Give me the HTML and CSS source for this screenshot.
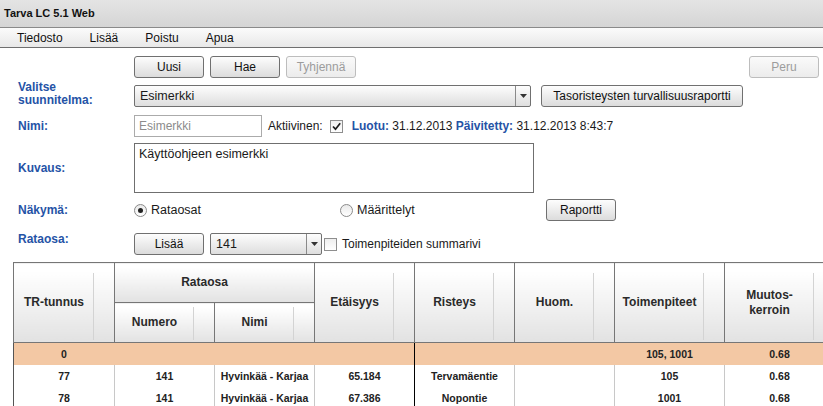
FILE: index.html
```html
<!DOCTYPE html>
<html lang="fi">
<head>
<meta charset="utf-8">
<title>Tarva LC 5.1 Web</title>
<link rel="stylesheet" href="styles.css">
</head>
<body>
<div class="titlebar">Tarva LC 5.1 Web</div>
<nav class="menubar">
  <span class="menu-item">Tiedosto</span>
  <span class="menu-item">Lisää</span>
  <span class="menu-item">Poistu</span>
  <span class="menu-item">Apua</span>
</nav>
<main class="form">
  <div class="row h-actions">
    <div class="label"></div>
    <div class="btn">Uusi</div>
    <div class="btn">Hae</div>
    <div class="btn disabled">Tyhjennä</div>
    <div class="btn disabled push-right">Peru</div>
  </div>
  <div class="row h-plan">
    <div class="label two-line">Valitse<br>suunnitelma:</div>
    <div class="select plan-select"><span class="select-value">Esimerkki</span><span class="select-arrow"><svg width="7" height="4" viewBox="0 0 7 4"><polygon points="0,0 7,0 3.5,4" fill="#333"/></svg></span></div>
    <div class="btn wide">Tasoristeysten turvallisuusraportti</div>
  </div>
  <div class="row h-name">
    <div class="label">Nimi:</div>
    <div class="input">Esimerkki</div>
    <span class="text active-label">Aktiivinen:</span>
    <span class="check checked"><svg width="11" height="11" viewBox="0 0 11 11"><path d="M2 5.5 L4.5 8.2 L9.2 2.2" fill="none" stroke="#1a1a1a" stroke-width="1.7"/></svg></span>
    <span class="meta"><b class="blue">Luotu:</b> 31.12.2013 <b class="blue">Päivitetty:</b> 31.12.2013 8:43:7</span>
  </div>
  <div class="row h-desc">
    <div class="label">Kuvaus:</div>
    <div class="textarea">Käyttöohjeen esimerkki</div>
  </div>
  <div class="row h-view">
    <div class="label">Näkymä:</div>
    <div class="option"><span class="radio selected"></span><span class="option-text">Rataosat</span></div>
    <div class="option"><span class="radio"></span><span class="option-text">Määrittelyt</span></div>
    <div class="btn">Raportti</div>
  </div>
  <div class="row h-section">
    <div class="label top">Rataosa:</div>
    <div class="btn">Lisää</div>
    <div class="select section-select"><span class="select-value">141</span><span class="select-arrow"><svg width="7" height="4" viewBox="0 0 7 4"><polygon points="0,0 7,0 3.5,4" fill="#333"/></svg></span></div>
    <span class="check summary-check"></span>
    <span class="text">Toimenpiteiden summarivi</span>
  </div>
</main>
<table class="grid">
  <colgroup>
    <col class="c-tr"><col class="c-std"><col class="c-std"><col class="c-std"><col class="c-std"><col class="c-std"><col class="c-wide"><col class="c-wide">
  </colgroup>
  <thead>
    <tr class="hrow">
      <th rowspan="2" class="handle">TR-tunnus</th>
      <th colspan="2" class="group">Rataosa</th>
      <th rowspan="2" class="handle">Etäisyys</th>
      <th rowspan="2" class="handle">Risteys</th>
      <th rowspan="2" class="handle">Huom.</th>
      <th rowspan="2" class="handle">Toimenpiteet</th>
      <th rowspan="2" class="handle">Muutos-<br>kerroin</th>
    </tr>
    <tr class="hrow">
      <th class="handle sub">Numero</th>
      <th class="handle sub">Nimi</th>
    </tr>
  </thead>
  <tbody>
    <tr class="summary">
      <td>0</td><td></td><td></td><td class="sep"></td><td></td><td></td><td>105, 1001</td><td>0.68</td>
    </tr>
    <tr>
      <td>77</td><td>141</td><td>Hyvinkää - Karjaa</td><td class="sep">65.184</td><td>Tervamäentie</td><td></td><td>105</td><td>0.68</td>
    </tr>
    <tr>
      <td>78</td><td>141</td><td>Hyvinkää - Karjaa</td><td class="sep">67.386</td><td>Nopontie</td><td></td><td>1001</td><td>0.68</td>
    </tr>
  </tbody>
</table>
</body>
</html>
```
FILE: styles.css
```css
* { box-sizing: border-box; }
html, body { margin: 0; padding: 0; }
body {
  font-family: "Liberation Sans", Arial, sans-serif;
  font-size: 12px;
  color: #1a1a1a;
  background: #fff;
  width: 823px;
  height: 406px;
  overflow: hidden;
}

.titlebar {
  height: 28px;
  padding-left: 4px;
  font-size: 11px;
  font-weight: bold;
  line-height: 26px;
  color: #111;
  background: linear-gradient(#e4e4e4, #d5d5d5);
  border-bottom: 1px solid #8a8a8a;
}

.menubar {
  display: flex;
  height: 20px;
  padding-left: 3.5px;
  font-size: 12px;
  line-height: 20px;
  color: #111;
  background: linear-gradient(#fbfbfb, #e8e8e8);
  border-bottom: 1px solid #6f6f6f;
}
.menu-item { padding: 0 13.5px; }

.form { padding-top: 8px; }
.row { display: flex; align-items: center; }
.h-actions { height: 22px; }
.h-plan { height: 36px; }
.h-name { height: 24px; }
.h-desc { height: 60px; }
.h-view { height: 24px; }
.h-section { height: 24px; margin-top: 10px; }

.label {
  flex: none;
  width: 134px;
  padding-left: 18px;
  font-size: 12px;
  font-weight: bold;
  line-height: 13px;
  color: #2553a6;
}
.label.two-line { line-height: 13px; padding-bottom: 4px; }
.label.top { align-self: flex-start; padding-top: 1px; }
.blue { color: #2553a6; }

.btn {
  flex: none;
  display: flex;
  align-items: center;
  justify-content: center;
  width: 70px;
  height: 22px;
  margin-right: 6px;
  border: 1px solid #707070;
  border-radius: 3px;
  background: linear-gradient(#fdfdfd, #dcdcdc);
  color: #111;
  font-size: 12px;
}
.btn.disabled { border-color: #bdbdbd; color: #9c9c9c; background: linear-gradient(#fafafa, #ececec); }
.btn.push-right { margin-left: auto; margin-right: 4px; }
.btn.wide { width: 202px; margin-left: 10px; }

.select {
  flex: none;
  display: flex;
  height: 22px;
  border: 1px solid #707070;
  border-radius: 2px;
  background: linear-gradient(#fdfdfd, #dedede);
}
.select-value { flex: 1; padding-left: 5px; line-height: 20px; font-size: 12.5px; }
.select-arrow {
  flex: none;
  width: 15px;
  display: flex;
  align-items: center;
  justify-content: center;
  border-left: 1px solid #8a8a8a;
}
.plan-select { width: 397px; }
.section-select { width: 112px; }

.input {
  flex: none;
  width: 128px;
  height: 22px;
  padding-left: 4px;
  line-height: 20px;
  border: 1px solid #ababab;
  color: #8c8c8c;
  font-size: 12px;
}
.active-label { margin-left: 6px; }
.check {
  flex: none;
  display: flex;
  align-items: center;
  justify-content: center;
  width: 13px;
  height: 13px;
  border: 1px solid #8e8e8e;
  background: linear-gradient(#eeeeee, #ffffff);
  margin-left: 7px;
}
.summary-check { margin-left: 2px; }
.meta { margin-left: 9px; }
.summary-check + .text { margin-left: 5px; }

.textarea {
  flex: none;
  width: 400px;
  height: 50px;
  padding: 3px 4px;
  border: 1px solid #6f6f6f;
  font-size: 12.5px;
  line-height: 14px;
}

.option { flex: none; display: flex; align-items: center; width: 206px; }
.option:first-of-type { margin-left: 1px; width: 205px; }
.radio {
  flex: none;
  display: flex;
  align-items: center;
  justify-content: center;
  width: 13px;
  height: 13px;
  border: 1px solid #8a8a8a;
  border-radius: 50%;
  background: linear-gradient(#e9e9e9, #ffffff);
}
.radio.selected::before {
  content: "";
  width: 5px;
  height: 5px;
  border-radius: 50%;
  background: #222;
}
.option-text { margin-left: 4px; font-size: 12.5px; }

.grid {
  margin: 6px 0 0 13px;
  border-collapse: collapse;
  table-layout: fixed;
  width: 821px;
}
.c-tr { width: 101px; }
.c-std { width: 100px; }
.c-wide { width: 110px; }

.grid th {
  position: relative;
  height: 40px;
  padding: 0 20px 0 0;
  border: 1px solid #767676;
  background: linear-gradient(#ffffff 10%, #e2e2e2);
  font-size: 12px;
  font-weight: bold;
  line-height: 15px;
  color: #2a2a2a;
  text-align: center;
}
.grid th.handle::after {
  content: "";
  position: absolute;
  right: 20px;
  top: 10px;
  bottom: 2px;
  width: 1px;
  background: #d3d3d3;
}
.grid th.sub::after { top: 4px; }

.grid td {
  height: 22px;
  padding: 0;
  border: 0;
  border-right: 1px solid #c8c8c8;
  text-align: center;
  font-size: 10.5px;
  font-weight: bold;
  color: #222;
}
.grid td:first-child { border-left: 1px solid #555; }
.grid td.sep { border-right-color: #000; }
.grid tr.summary td { background: #f3c8a4; border-right-color: #f3c8a4; }
.grid tr.summary td.sep { border-right-color: #000; }
```
